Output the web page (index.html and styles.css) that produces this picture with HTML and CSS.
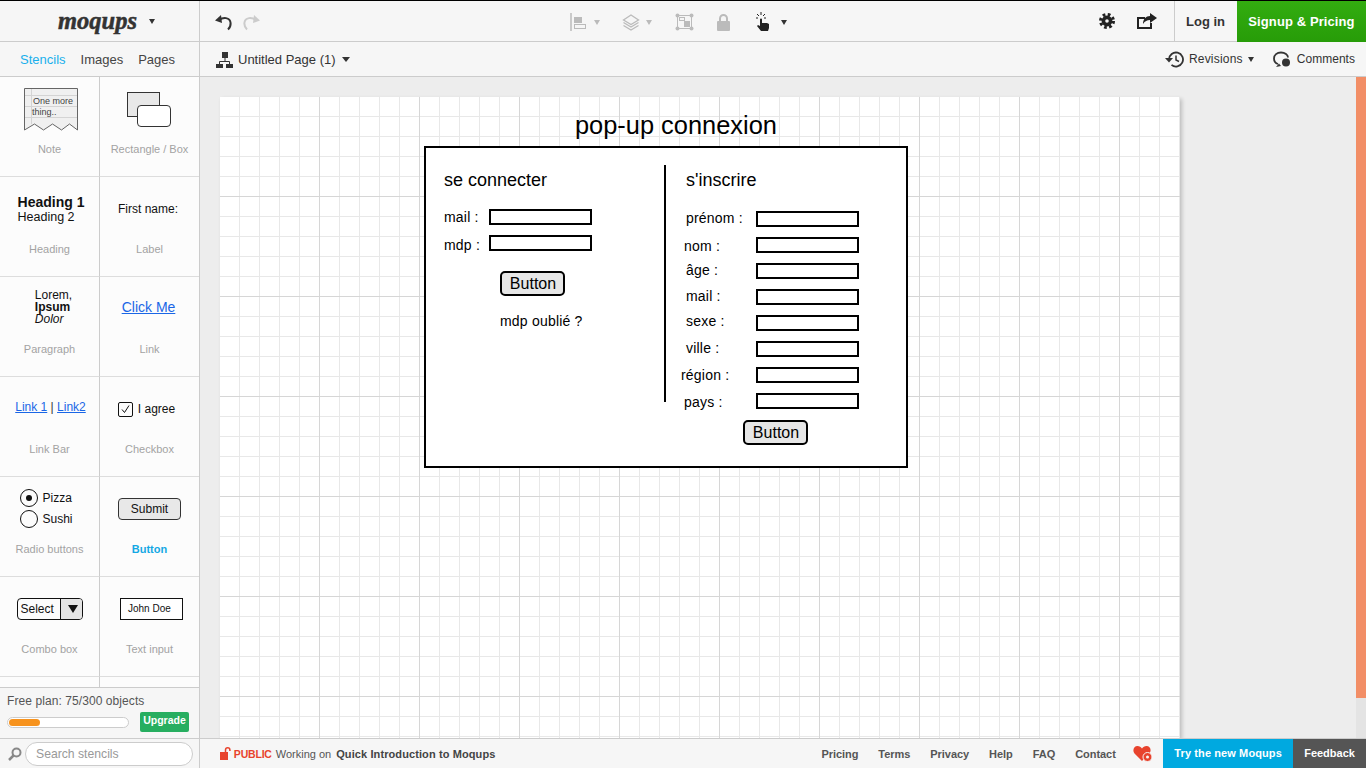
FILE: index.html
```html
<!DOCTYPE html>
<html lang="en">
<head>
<meta charset="utf-8">
<title>Moqups</title>
<link rel="stylesheet" href="styles.css">
</head>
<body>
<header class="toolbar">
  <div class="brand"><span class="logo">moqups</span><span class="caret brand-caret"></span></div>
  <div class="history">
    <svg class="ic-undo" width="17" height="16" viewBox="0 0 17 16"><path d="M4 5C8 2 15 2 15.600 8c.2 3-1 5-2.600 6.500" fill="none" stroke="#333" stroke-width="2"/><path d="M0 5.500 6 0l1 8z" fill="#333"/></svg>
    <svg class="ic-redo" width="17" height="16" viewBox="0 0 17 16"><path d="M13 5C9 2 2 2 1.400 8c-.2 3 1 5 2.600 6.500" fill="none" stroke="#ccc" stroke-width="2"/><path d="M17 5.500 11 0l-1 8z" fill="#ccc"/></svg>
  </div>
  <div class="tools">
    <svg class="t-align" width="17" height="18" viewBox="0 0 17 18"><path d="M1 0v18" stroke="#bbb" stroke-width="1.500"/><rect x="4" y="4" width="8" height="6" fill="#bbb"/><rect x="4.500" y="11.500" width="11" height="4" fill="none" stroke="#bbb"/></svg>
    <span class="caret light t-c1"></span>
    <svg class="t-layers" width="18" height="17" viewBox="0 0 18 17"><g fill="none" stroke="#bbb" stroke-width="1.300"><path d="M9 1l7.500 5L9 10.500 1.500 6z"/><path d="M1.500 8.500l7.500 4.500 7.500-4.500M1.500 11.500 9 16l7.500-4.500"/></g></svg>
    <span class="caret light t-c2"></span>
    <svg class="t-resize" width="19" height="18" viewBox="0 0 19 18"><rect x="2.500" y="2.500" width="14" height="13" fill="none" stroke="#bbb"/><g fill="#bbb"><circle cx="2.500" cy="2.500" r="2"/><circle cx="16.500" cy="2.500" r="2"/><circle cx="2.500" cy="15.500" r="2"/><circle cx="16.500" cy="15.500" r="2"/><rect x="9" y="8" width="6" height="6"/></g><rect x="4.500" y="4.500" width="5" height="3" fill="none" stroke="#bbb"/></svg>
    <svg class="t-lock" width="13" height="17" viewBox="0 0 13 17"><path d="M3 8V4.500a3.500 3.500 0 0 1 7 0V8" fill="none" stroke="#bbb" stroke-width="2"/><rect y="7" width="13" height="10" rx="1" fill="#bbb"/></svg>
    <svg class="t-hand" width="16" height="19" viewBox="0 0 16 19"><path d="M5 7.500a1 1 0 0 1 2 0V11h5l2 1v4l-1 3H6l-4-5 1-1 2 1z" fill="#222"/><path d="M6 0v3M2 2l2 2M10 2 8 4M1 6h2M9 6h2" stroke="#222"/></svg>
    <span class="caret t-c3"></span>
  </div>
  <div class="actions">
    <svg class="a-gear" width="16" height="16" viewBox="0 0 16 16"><circle cx="8" cy="8" r="3.600" fill="none" stroke="#222" stroke-width="3.600"/><circle cx="8" cy="8" r="6.500" fill="none" stroke="#222" stroke-width="3" stroke-dasharray="2.700 2.400"/></svg>
    <svg class="a-share" width="20" height="16" viewBox="0 0 20 16"><path d="M8 5H1v10h13v-5" fill="none" stroke="#222" stroke-width="2"/><path d="M13 0l7 5-7 5V7c-3 0-5 1-7 4 0-5 3-8 7-8z" fill="#222"/></svg>
  </div>
  <a class="login">Log in</a>
  <a class="signup">Signup &amp; Pricing</a>
</header>

<nav class="subbar">
  <div class="tabs"><span class="tab active">Stencils</span><span class="tab">Images</span><span class="tab">Pages</span></div>
  <div class="page-name">
    <svg width="17" height="16" viewBox="0 0 17 16"><g fill="#333"><rect x="6" width="6" height="6"/><rect y="12" width="7" height="4"/><rect x="10" y="12" width="7" height="4"/></g><path d="M9 6v3M3.500 12V9.500h10V12" fill="none" stroke="#333"/></svg>
    <span class="page-title">Untitled Page (1)</span><span class="caret big"></span>
  </div>
  <div class="sub-right">
    <svg width="20" height="17" viewBox="0 0 20 17"><path d="M4 8.500a7 7 0 1 1 2.500 5.400" fill="none" stroke="#333" stroke-width="1.800"/><path d="M0 7h8l-4 4.500z" fill="#333"/><path d="M11 4.500V9l3 1.500" fill="none" stroke="#333" stroke-width="1.500"/></svg>
    <span class="rev">Revisions</span><span class="caret small"></span>
    <svg class="c-icon" width="19" height="17" viewBox="0 0 19 17"><path d="M5 13C2 12 1 10 1 7.500 1 4 4 1.500 8 1.500s7 2.500 7 5" fill="none" stroke="#333" stroke-width="1.800"/><path d="M6 12.500 3 16l5-1" fill="#333"/><circle cx="13" cy="11.500" r="4" fill="#333"/></svg>
    <span class="com">Comments</span>
  </div>
</nav>

<main class="main">
  <aside class="sidebar">
    <div class="stencils">
      <div class="cell">
        <div class="preview">
          <svg class="note" width="54" height="43" viewBox="0 0 54 43"><path d="M.5 42V.5h53V42l-8-6-8 6-9-6-9 6-9-6z" fill="#f0f0f0" stroke="#666"/><path d="M7.500 1v35M1 7.500h52M1 18.500h52M1 29.500h52" stroke="#d4d4d4"/><text x="9" y="16" class="note-text">One more</text><text x="8" y="27" class="note-text">thing..</text></svg>
        </div>
        <div class="label">Note</div>
      </div>
      <div class="cell">
        <div class="preview">
          <div class="rect-stack"><span class="rect-back"></span><span class="rect-front"></span></div>
        </div>
        <div class="label">Rectangle / Box</div>
      </div>
      <div class="cell">
        <div class="preview"><div class="heading"><b>Heading 1</b><span>Heading 2</span></div></div>
        <div class="label">Heading</div>
      </div>
      <div class="cell">
        <div class="preview"><span class="first-name">First name:</span></div>
        <div class="label">Label</div>
      </div>
      <div class="cell">
        <div class="preview"><div class="para">Lorem,<b>Ipsum</b><i>Dolor</i></div></div>
        <div class="label">Paragraph</div>
      </div>
      <div class="cell">
        <div class="preview"><span class="click-me">Click Me</span></div>
        <div class="label">Link</div>
      </div>
      <div class="cell">
        <div class="preview"><div class="linkbar"><u>Link 1</u> | <u>Link2</u></div></div>
        <div class="label">Link Bar</div>
      </div>
      <div class="cell">
        <div class="preview"><div class="agree"><span class="check"><svg width="11" height="11" viewBox="0 0 11 11"><path d="M2 5.500 4.500 8.500 9 1.500" fill="none" stroke="#111"/></svg></span>I agree</div></div>
        <div class="label">Checkbox</div>
      </div>
      <div class="cell">
        <div class="preview"><div class="radios"><div class="radio-row"><span class="radio on"></span>Pizza</div><div class="radio-row"><span class="radio"></span>Sushi</div></div></div>
        <div class="label">Radio buttons</div>
      </div>
      <div class="cell">
        <div class="preview"><span class="submit">Submit</span></div>
        <div class="label label-active">Button</div>
      </div>
      <div class="cell">
        <div class="preview"><div class="combo"><span class="combo-text">Select</span><span class="combo-btn"></span></div></div>
        <div class="label">Combo box</div>
      </div>
      <div class="cell">
        <div class="preview"><span class="john">John Doe</span></div>
        <div class="label">Text input</div>
      </div>
      <div class="cell stub"></div>
      <div class="cell stub"></div>
    </div>
    <div class="plan">
      <div class="plan-text">Free plan: 75/300 objects</div>
      <div class="plan-row">
        <div class="progress"><div class="progress-fill"></div></div>
        <span class="upgrade">Upgrade</span>
      </div>
    </div>
  </aside>
  <section class="workspace">
    <div class="canvas">
      <div class="w-title">pop-up connexion</div>
      <div class="w-box"></div>
      <div class="w-line"></div>
      <div class="w-h w-h1">se connecter</div>
      <div class="w-h w-h2">s'inscrire</div>
      <div class="w-t l1">mail :</div><div class="w-in i1"></div>
      <div class="w-t l2">mdp :</div><div class="w-in i2"></div>
      <div class="w-btn b1">Button</div>
      <div class="w-t l3">mdp oublié ?</div>
      <div class="w-t r1">prénom :</div><div class="w-in j1"></div>
      <div class="w-t r2">nom :</div><div class="w-in j2"></div>
      <div class="w-t r3">âge :</div><div class="w-in j3"></div>
      <div class="w-t r4">mail :</div><div class="w-in j4"></div>
      <div class="w-t r5">sexe :</div><div class="w-in j5"></div>
      <div class="w-t r6">ville :</div><div class="w-in j6"></div>
      <div class="w-t r7">région :</div><div class="w-in j7"></div>
      <div class="w-t r8">pays :</div><div class="w-in j8"></div>
      <div class="w-btn b2">Button</div>
    </div>
  </section>
  <div class="scrollbar"><div class="thumb"></div></div>
</main>

<footer class="status">
  <div class="search">
    <svg width="14" height="14" viewBox="0 0 14 14"><circle cx="8.500" cy="5.500" r="4" fill="none" stroke="#888" stroke-width="2"/><path d="M5.500 8.500 1 13" stroke="#888" stroke-width="2.500"/></svg>
    <span class="search-box">Search stencils</span>
  </div>
  <div class="info">
    <svg width="11" height="13" viewBox="0 0 11 13"><rect y="5" width="8" height="8" fill="#e8432d"/><path d="M5.500 5V3a2.200 2.200 0 0 1 4.400 0v1" fill="none" stroke="#e8432d" stroke-width="1.500"/></svg>
    <b class="public">PUBLIC</b><span class="working">Working on</span><b class="project">Quick Introduction to Moqups</b>
  </div>
  <div class="links">
    <a>Pricing</a><a>Terms</a><a>Privacy</a><a>Help</a><a>FAQ</a><a>Contact</a>
  </div>
  <svg class="heart" width="20" height="17" viewBox="0 0 20 17"><path d="M9 16 1.500 8.500C-1 5.500 1 1 4.500 1 6.500 1 8 2 9 3.500 10 2 11.500 1 13.500 1 17 1 19 5 16.500 8.500z" fill="#e8432d"/><circle cx="14.500" cy="12" r="4.500" fill="#e8432d" stroke="#f6f6f6"/><circle cx="14.500" cy="12" r="1.500" fill="#f6f6f6"/></svg>
  <a class="try">Try the new Moqups</a>
  <a class="feedback">Feedback</a>
</footer>
</body>
</html>
```

FILE: styles.css
```css
* { box-sizing: border-box; }
html, body { margin: 0; padding: 0; }
body {
  width: 1366px; height: 768px; overflow: hidden;
  font-family: "Liberation Sans", Arial, sans-serif;
  color: #333; background: #f6f6f6;
  display: flex; flex-direction: column;
}
.caret {
  display: inline-block; width: 0; height: 0;
  border-left: 3.5px solid transparent; border-right: 3.5px solid transparent;
  border-top: 5px solid #333;
}
.caret.light { border-top-color: #bbb; }
.caret.big { border-left-width: 4px; border-right-width: 4px; }

/* toolbar */
.toolbar {
  height: 42px; flex: none; display: flex; align-items: center;
  border-top: 1px solid #000; border-bottom: 1px solid #ccc; background: #f6f6f6;
}
.brand {
  width: 200px; height: 40px; border-right: 1px solid #ccc;
  display: flex; align-items: center; padding-left: 58px;
}
.logo {
  font-family: "Liberation Serif", serif; font-style: italic; font-weight: 700;
  font-size: 24.500px; color: #333; width: 91px;
  -webkit-text-stroke: .5px #333;
  line-height: 38px;
}
.history { display: flex; gap: 11px; padding: 4px 0 0 15px; width: 370px; }
.tools { display: flex; align-items: center; width: 529px; padding-top: 2px; }
.t-align { margin-right: 7px; }
.t-c1 { margin-right: 22px; }
.t-layers { margin-right: 6px; }
.t-c2 { margin-right: 23px; }
.t-resize { margin-right: 23px; }
.t-lock { margin-right: 25px; }
.t-hand { margin-right: 10px; margin-top: -2px; }
.actions { display: flex; align-items: center; gap: 22px; width: 75px; height: 40px; }
.login {
  width: 63px; height: 40px; border-left: 1px solid #ccc;
  font-size: 13px; font-weight: 700; color: #333; line-height: 41px; padding-left: 11px;
}
.signup {
  width: 129px; height: 41px; margin-bottom: -1px; line-height: 41px; text-align: center;
  background: linear-gradient(#33ad10, #279c08);
  color: #fff; font-size: 13px; font-weight: 700; letter-spacing: .1px;
}

/* second bar */
.subbar {
  height: 35px; flex: none; display: flex; align-items: center;
  border-bottom: 1px solid #ccc; background: #f6f6f6;
}
.tabs {
  width: 200px; height: 34px; border-right: 1px solid #ccc;
  display: flex; align-items: center; padding: 1px 0 0 20px; gap: 15px; font-size: 13px;
}
.tab { color: #444; }
.tab.active { color: #1ab0ec; }
.page-name { display: flex; align-items: center; padding: 1px 0 0 16px; font-size: 13px; width: 700px; }
.page-title { margin: 0 6px 0 5px; }
.sub-right { margin-left: auto; display: flex; align-items: center; font-size: 12px; padding: 0 11px 0 0; }
.rev { margin: 0 5px 0 4px; letter-spacing: .2px; }
.c-icon { margin: 0 5px 0 19px; }
.com { letter-spacing: .03px; }

/* main */
.main { height: 661px; flex: none; display: flex; }
.sidebar {
  width: 200px; flex: none; border-right: 1px solid #ccc; background: #fcfcfc;
  display: flex; flex-direction: column;
}
.stencils { display: grid; grid-template-columns: 100px 99px; grid-auto-rows: 100px; height: 610px; overflow: hidden; }
.cell { border-bottom: 1px solid #ddd; display: flex; flex-direction: column; }
.cell:nth-child(odd) { border-right: 1px solid #ccc; }
.preview { height: 64px; flex: none; display: flex; align-items: center; justify-content: center; font-size: 12px; color: #111; }
.label { font-size: 11px; line-height: 16px; text-align: center; color: #a3a3a3; }
.label-active { color: #14a8e4; font-weight: 700; }

.note { margin-left: 2px; }
.note-text { font-size: 9px; fill: #444; font-family: "Liberation Sans", sans-serif; }
.rect-stack { width: 44px; height: 35px; position: relative; margin-left: -1px; }
.rect-back { position: absolute; left: 0; top: 0; width: 33px; height: 25px; background: #e8e8e8; border: 1px solid #333; }
.rect-front { position: absolute; right: 0; bottom: 0; width: 34px; height: 22px; background: #fff; border: 1px solid #333; border-radius: 4px; }
.heading { display: flex; flex-direction: column; line-height: 14px; font-size: 12.5px; margin-left: 3px; }
.heading b { font-size: 14px; line-height: 15px; }
.first-name { font-size: 12px; margin-left: -3px; }
.para { display: flex; flex-direction: column; line-height: 12px; font-size: 12px; margin: -5px 0 0 8px; }
.click-me { font-size: 14px; color: #1a66e6; text-decoration: underline; margin: -5px 0 0 -2px; }
.linkbar { font-size: 12px; color: #333; margin: -4px 0 0 2px; }
.linkbar u { color: #1a66e6; }
.agree { display: flex; align-items: center; gap: 5px; font-size: 12px; margin-left: -6px; }
.check { width: 15px; height: 15px; border: 1px solid #111; border-radius: 2px; display: flex; align-items: center; justify-content: center; }
.radios { display: flex; flex-direction: column; gap: 3px; font-size: 12px; margin: -2px 0 0 -6px; }
.radio-row { display: flex; align-items: center; gap: 4px; height: 18px; }
.radio { width: 18px; height: 18px; border: 1px solid #111; border-radius: 50%; display: flex; align-items: center; justify-content: center; }
.radio.on::after { content: ""; width: 6px; height: 6px; border-radius: 50%; background: #111; }
.submit { width: 63px; height: 22px; line-height: 20px; text-align: center; background: #e8e8e8; border: 1px solid #333; border-radius: 4px; font-size: 12px; }
.combo { width: 66px; height: 22px; border: 1px solid #111; border-radius: 4px; display: flex; overflow: hidden; font-size: 12px; }
.combo-text { width: 42px; line-height: 20px; padding-left: 3px; }
.combo-btn { flex: 1; background: #e4e4e4; border-left: 1px solid #111; position: relative; }
.combo-btn::after { content: ""; position: absolute; left: 7px; top: 6px; border-left: 5px solid transparent; border-right: 5px solid transparent; border-top: 8px solid #111; }
.john { width: 63px; height: 22px; line-height: 20px; border: 1px solid #111; background: #fff; font-size: 10px; padding-left: 7px; margin-left: 4px; }

.plan { border-top: 1px solid #ccc; flex: 1; background: #f6f6f6; padding: 6px 0 0 7px; }
.plan-text { font-size: 12px; color: #555; line-height: 15px; letter-spacing: .08px; }
.plan-row { display: flex; align-items: center; margin-top: 3px; }
.progress { width: 122px; height: 11px; border: 1px solid #ccc; border-radius: 6px; background: #fff; padding: 1px; }
.progress-fill { width: 31px; height: 7px; border-radius: 4px; background: #f7931e; }
.upgrade { margin-left: 11px; width: 49px; height: 20px; line-height: 17px; text-align: center; background: #27ae60; color: #fff; font-size: 10.5px; font-weight: 700; border-radius: 2px; }

/* workspace */
.workspace { width: 1156px; flex: none; background: #ededed; padding: 20px 0 0 20px; overflow: hidden; }
.canvas {
  width: 960px; height: 641px; position: relative; background-color: #fff;
  background-image:
    linear-gradient(to right, transparent 99px, #d6d6d6 99px),
    linear-gradient(to bottom, transparent 99px, #d6d6d6 99px),
    linear-gradient(to right, transparent 19px, #e8e8e8 19px),
    linear-gradient(to bottom, transparent 19px, #e8e8e8 19px);
  background-size: 100px 100px, 100px 100px, 20px 20px, 20px 20px;
  box-shadow: 2px 2px 4px rgba(0,0,0,.2);
  color: #000;
}
.w-title { position: absolute; left: 355px; top: 12px; font-size: 25.400px; line-height: 32px; }
.w-box { position: absolute; left: 204px; top: 49px; width: 484px; height: 322px; background: #fff; border: 2px solid #000; }
.w-line { position: absolute; left: 444px; top: 68px; width: 2px; height: 237px; background: #000; }
.w-h { position: absolute; font-size: 18px; line-height: 22px; top: 72px; }
.w-h1 { left: 224px; }
.w-h2 { left: 466px; }
.w-t { position: absolute; font-size: 14px; line-height: 16px; letter-spacing: .2px; }
.w-in { position: absolute; width: 103px; height: 16px; border: 2px solid #000; background: #fff; }
.w-btn { position: absolute; width: 65px; height: 25px; border: 2px solid #000; border-radius: 5px; background: #e6e6e6; font-size: 16px; line-height: 21px; text-align: center; padding-left: 1px; }
.l1 { left: 224px; top: 112px; } .l2 { left: 224px; top: 140px; } .l3 { left: 280px; top: 216px; }
.i1 { left: 269px; top: 112px; } .i2 { left: 269px; top: 138px; }
.b1 { left: 280px; top: 174px; } .b2 { left: 523px; top: 323px; }
.r1 { left: 466px; top: 113px; } .r2 { left: 464px; top: 141px; } .r3 { left: 466px; top: 165px; } .r4 { left: 466px; top: 191px; }
.r5 { left: 466px; top: 216px; } .r6 { left: 466px; top: 243px; } .r7 { left: 461px; top: 270px; } .r8 { left: 464px; top: 297px; }
.j1 { left: 536px; top: 114px; } .j2 { left: 536px; top: 140px; } .j3 { left: 536px; top: 166px; } .j4 { left: 536px; top: 192px; }
.j5 { left: 536px; top: 218px; } .j6 { left: 536px; top: 244px; } .j7 { left: 536px; top: 270px; } .j8 { left: 536px; top: 296px; }

.scrollbar { width: 10px; flex: none; background: #e4e4e4; }
.thumb { height: 621px; background: #f28e66; }

/* status */
.status { height: 30px; flex: none; border-top: 1px solid #ccc; display: flex; align-items: center; background: #f6f6f6; }
.search { width: 200px; height: 29px; border-right: 1px solid #ccc; display: flex; align-items: center; padding-left: 8px; gap: 3px; }
.search-box { width: 168px; height: 24px; line-height: 22px; border: 1px solid #ccc; border-radius: 12px; background: #fff; padding-left: 10px; font-size: 12.2px; color: #999; }
.info { display: flex; align-items: center; padding-left: 20px; width: 605px; font-size: 11px; }
.public { color: #e8432d; margin-left: 3px; font-size: 10.5px; letter-spacing: -.2px; }
.working { color: #555; margin-left: 4px; }
.project { color: #444; margin-left: 5px; letter-spacing: .1px; }
.links { display: flex; gap: 20px; font-size: 11px; font-weight: 700; color: #555; width: 329px; padding-left: 17px; letter-spacing: -.05px; }
.heart { margin-right: 10px; }
.try { width: 130px; height: 29px; line-height: 29px; text-align: center; background: #00a9e0; color: #fff; font-size: 11px; font-weight: 700; letter-spacing: .1px; }
.feedback { width: 73px; height: 29px; line-height: 29px; text-align: center; background: #555; color: #fff; font-size: 11px; font-weight: 700; }
```
